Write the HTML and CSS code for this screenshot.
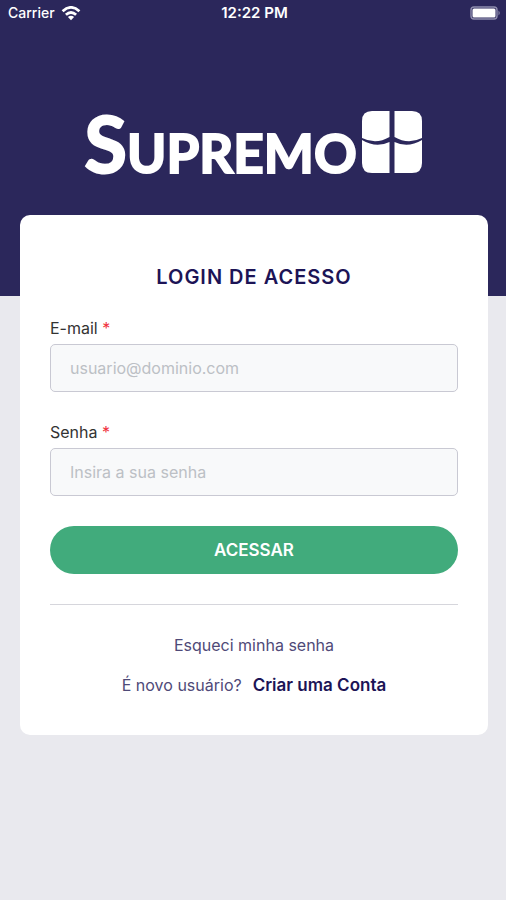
FILE: index.html
```html
<!DOCTYPE html>
<html lang="pt-BR">
<head>
<meta charset="utf-8">
<meta name="viewport" content="width=device-width, initial-scale=1">
<title>Supremo</title>
<link rel="stylesheet" href="styles.css">
</head>
<body>
<header class="hero">
  <div class="status">
    <span class="carrier">Carrier
      <svg class="wifi" width="20" height="15" viewBox="0 0 20 15" aria-hidden="true">
        <g fill="none" stroke="#fff" stroke-width="2.8">
          <path d="M1.6 5.2Q10-2.400 18.400 5.200"/>
          <path d="M4.900 8.700Q10 4.200 15.100 8.700"/>
        </g>
        <path d="M6.900 11Q10 8.400 13.100 11L10 14.300Z" fill="#fff"/>
      </svg>
    </span>
    <span class="time">12:22 PM</span>
    <span class="power">
      <svg width="31" height="14" viewBox="0 0 31 14" aria-hidden="true">
        <rect x="1" y="1" width="26" height="12" rx="3" fill="none" stroke="#8f8dae" stroke-width="1.400"/>
        <rect x="2.500" y="2.500" width="23" height="9" rx="1.500" fill="#fff"/>
        <path d="M28.500 4.500Q31 7 28.500 9.500Z" fill="#8f8dae"/>
      </svg>
    </span>
  </div>
  <div class="brand">
    <span class="wordmark"><span class="initial">S</span>UPREMO</span>
    <svg class="mark" width="60" height="62" viewBox="0 0 60 62" aria-hidden="true">
      <g fill="#fff">
        <path d="M10 0H27.500V26Q14 34 0 27V10Q0 0 10 0Z"/>
        <path d="M32.500 0H50Q60 0 60 10V27Q46 34 32.500 26Z"/>
        <path d="M0 29Q14 37.500 27.500 31V62H10Q0 62 0 52Z"/>
        <path d="M32.500 31Q46 37.500 60 29V52Q60 62 50 62H32.500Z"/>
      </g>
    </svg>
  </div>
</header>
<main class="card">
  <h1 class="title">LOGIN DE ACESSO</h1>
  <form class="form">
    <div class="field">
      <label for="email">E-mail <span class="required">*</span></label>
      <input id="email" type="email" placeholder="usuario@dominio.com">
    </div>
    <div class="field">
      <label for="password">Senha <span class="required">*</span></label>
      <input id="password" type="password" placeholder="Insira a sua senha">
    </div>
    <button class="submit" type="button">ACESSAR</button>
  </form>
  <div class="links">
    <a href="#recuperar">Esqueci minha senha</a>
    <p class="signup"><span>É novo usuário?</span><a class="create" href="#criar">Criar uma Conta</a></p>
  </div>
</main>
</body>
</html>
```
FILE: styles.css
```css
* { box-sizing: border-box; }

body {
  margin: 0;
  min-height: 100vh;
  background: #e9e9ee;
  color: #2b275b;
  font-family: Inter, "Liberation Sans", sans-serif;
  font-size: 16px;
  line-height: 20px;
}

.hero {
  padding-bottom: 123px;
  background: #2b275b;
  color: #fff;
}

.status {
  display: grid;
  grid-template-columns: 1fr auto 1fr;
  align-items: center;
  padding: 3px 5px 3px 8px;
  font-size: 14px;
  font-weight: 500;
}

.carrier {
  display: flex;
  align-items: center;
  gap: 6px;
}

.time {
  font-size: 15px;
  font-weight: 600;
}

.power {
  display: flex;
  justify-content: flex-end;
}

.brand {
  display: flex;
  justify-content: center;
  align-items: baseline;
  gap: 5px;
  height: 62px;
  margin-top: 85px;
}

.wordmark {
  font-family: Lato, sans-serif;
  font-size: 53px;
  font-weight: 700;
  line-height: 62px;
  -webkit-text-stroke: 2px #fff;
}

.initial {
  font-size: 78px;
  line-height: 62px;
}

.card {
  margin: -81px 18px 0 20px;
  padding: 50px 30px 40px;
  border-radius: 10px;
  background: #fff;
}

.title {
  margin: 0 0 29px;
  color: #1c1456;
  font-size: 20px;
  font-weight: 600;
  line-height: 24px;
  letter-spacing: 1px;
  text-align: center;
}

.form {
  display: grid;
  gap: 30px;
}

.field {
  display: grid;
  gap: 6px;
}

.field label { color: #333; }

.required { color: #f0303c; }

.field input {
  width: 100%;
  height: 48px;
  padding: 0 19px;
  border: 1px solid #c9c9d3;
  border-radius: 5px;
  background: #f8f9fa;
  color: #333;
  font: inherit;
}

.field input::placeholder {
  color: #bcc0c5;
  opacity: 1;
}

.submit {
  height: 48px;
  border: 0;
  border-radius: 24px;
  background: #41ab7c;
  color: #fff;
  font: inherit;
  font-size: 17px;
  font-weight: 600;
}

.links {
  display: grid;
  justify-items: center;
  gap: 20px;
  margin-top: 30px;
  padding-top: 30px;
  border-top: 1px solid #d6d6dc;
}

.links a {
  color: #4f4a78;
  text-decoration: none;
}

.signup {
  display: flex;
  gap: 11px;
  margin: 0;
  color: #4f4a78;
}

.links .create {
  color: #1c1456;
  font-size: 17px;
  font-weight: 600;
}
```
